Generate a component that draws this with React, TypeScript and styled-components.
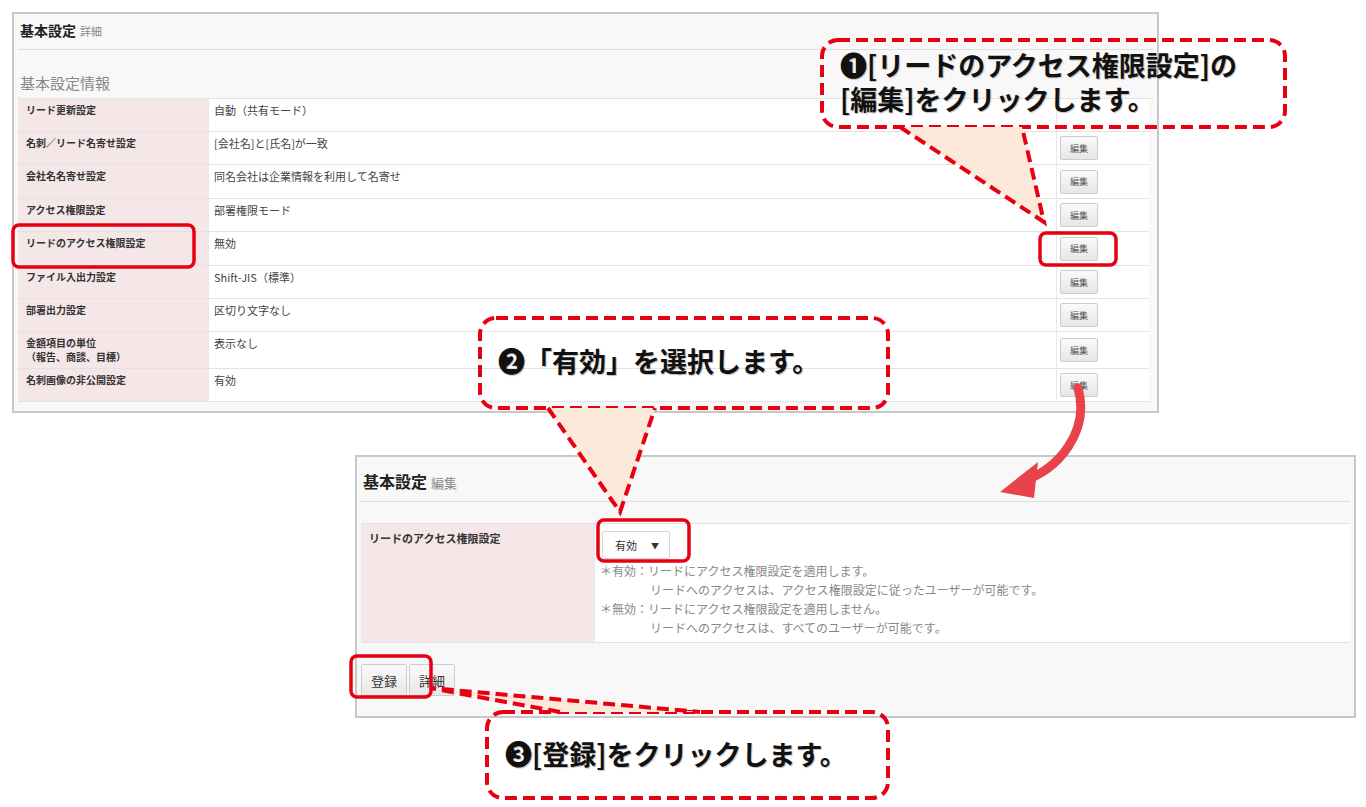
import React from "react";
import styled, { createGlobalStyle } from "styled-components";

const Global = createGlobalStyle`
  body { margin: 0; background: #fff; font-family: "Noto Sans CJK JP", "Noto Sans", sans-serif; color: #333; }
`;

const Page = styled.div`
  position: relative;
  width: 1366px;
  height: 807px;
  padding: 12px 0 0 12px;
  box-sizing: border-box;
`;

const Panel = styled.div<{ $w: number; $h: number; $ml?: number; $mt?: number }>`
  width: ${({ $w }) => $w}px;
  height: ${({ $h }) => $h}px;
  margin-left: ${({ $ml }) => $ml ?? 0}px;
  margin-top: ${({ $mt }) => $mt ?? 0}px;
  box-sizing: border-box;
  border: 2px solid #c8c8c8;
  background: #f8f8f8;
  padding: 0 4px;
  display: flex;
  flex-direction: column;
`;

const Head = styled.div`
  display: flex;
  align-items: baseline;
  gap: 4px;
  height: 36px;
  padding-top: 6px;
  padding-left: 2px;
  box-sizing: border-box;
  border-bottom: 1px solid #ddd;
  font-size: 14px;
  font-weight: 700;
  color: #222;
  span { font-size: 11px; font-weight: 400; color: #888; }
`;

const Sub = styled.div`
  font-size: 15px;
  color: #888;
  padding: 22px 0 5px 2px;
`;

const Table = styled.div<{ $cols: string; $mt?: number }>`
  display: grid;
  grid-template-columns: ${({ $cols }) => $cols};
  border-top: 1px solid #e2e2e2;
  margin-top: ${({ $mt }) => $mt ?? 0}px;
  font-size: 11px;
`;

const Label = styled.div<{ $h: number }>`
  background: #f5e6e8;
  height: ${({ $h }) => $h}px;
  box-sizing: border-box;
  padding: 4px 8px;
  font-weight: 700;
  font-size: 10px;
  color: #333;
  border-bottom: 1px solid #e2e2e2;
  line-height: 14px;
`;

const Value = styled.div<{ $h: number }>`
  background: #fff;
  height: ${({ $h }) => $h}px;
  box-sizing: border-box;
  padding: 3px 5px;
  color: #444;
  border-bottom: 1px solid #e2e2e2;
  border-left: 1px solid #e8e8e8;
`;

const BtnCell = styled(Value)`
  display: flex;
  align-items: center;
  padding-left: 3px;
`;

const SmallBtn = styled.div`
  width: 36px;
  height: 22px;
  border: 1px solid #ccc;
  border-radius: 2px;
  background: linear-gradient(#fafafa, #e6e6e6);
  font-size: 9px;
  color: #555;
  display: grid;
  place-items: center;
`;

const SelectBox = styled.div`
  width: 68px;
  height: 28px;
  margin: 4px 0 0 2px;
  border: 1px solid #d4d4d4;
  border-radius: 2px;
  background: #fff;
  display: flex;
  align-items: center;
  justify-content: space-between;
  padding: 0 10px 0 12px;
  box-sizing: border-box;
  font-size: 11px;
  color: #333;
`;

const Note = styled.div`
  font-size: 12px;
  color: #888;
  line-height: 19px;
  margin-top: 2px;
  div { padding-left: 50px; }
  p { margin: 0; }
`;

const BtnRow = styled.div`
  display: flex;
  gap: 2px;
  margin-top: 21px;
`;

const Btn = styled.div`
  height: 30px;
  padding: 0 9px;
  border: 1px solid #ccc;
  border-radius: 2px;
  background: linear-gradient(#fafafa, #e8e8e8);
  font-size: 13px;
  color: #333;
  display: grid;
  place-items: center;
`;

const Overlay = styled.svg`
  position: absolute;
  left: 0;
  top: 0;
  pointer-events: none;
`;

const CalloutText = styled.div<{ $x: number; $y: number }>`
  position: absolute;
  left: ${({ $x }) => $x}px;
  top: ${({ $y }) => $y}px;
  font-size: 27px;
  font-weight: 700;
  line-height: 34px;
  color: #111;
  text-shadow: 1px 1px 1px rgba(0,0,0,0.25);
  white-space: nowrap;
`;

const rows: [string, string, number][] = [
  ["リード更新設定", "自動（共有モード）", 33],
  ["名刺／リード名寄せ設定", "[会社名]と[氏名]が一致", 33],
  ["会社名名寄せ設定", "同名会社は企業情報を利用して名寄せ", 34],
  ["アクセス権限設定", "部署権限モード", 33],
  ["リードのアクセス権限設定", "無効", 34],
  ["ファイル入出力設定", "Shift-JIS（標準）", 33],
  ["部署出力設定", "区切り文字なし", 33],
  ["金額項目の単位\n（報告、商談、目標）", "表示なし", 37],
  ["名刺画像の非公開設定", "有効", 33],
];

const dash = { stroke: "#e60012", strokeWidth: 4, strokeDasharray: "12 6", fill: "none" } as const;
const fillC = "#fde9d9";

const Callout = ({ x, y, w, h, tail }: { x: number; y: number; w: number; h: number; tail: [number, number][] }) => (
  <g>
    <rect x={x} y={y} width={w} height={h} rx={16} fill={fillC} style={dash} />
    <polygon points={tail.map(p => p.join(",")).join(" ")} fill={fillC} />
    <polyline points={tail.map(p => p.join(",")).join(" ")} {...dash} />
  </g>
);

const Hl = ({ x, y, w, h }: { x: number; y: number; w: number; h: number }) => (
  <rect x={x} y={y} width={w} height={h} rx={6} fill="none" stroke="#e60012" strokeWidth={3.5} />
);

export default function App() {
  return (
    <Page>
      <Global />
      <Panel $w={1147} $h={401}>
        <Head>基本設定<span>詳細</span></Head>
        <Sub>基本設定情報</Sub>
        <Table $cols="190px 848px 93px">
          {rows.map(([l, v, h]) => (
            <React.Fragment key={l}>
              <Label $h={h} style={{ whiteSpace: "pre-line" }}>{l}</Label>
              <Value $h={h}>{v}</Value>
              <BtnCell $h={h}>{l !== "リード更新設定" ? <SmallBtn>編集</SmallBtn> : null}</BtnCell>
            </React.Fragment>
          ))}
        </Table>
      </Panel>
      <Panel $w={1001} $h={263} $ml={343} $mt={42}>
        <Head style={{ height: 45, paddingTop: 12, fontSize: 16 }}>基本設定<span style={{ fontSize: 13 }}>編集</span></Head>
        <Table $cols="233px 1fr" $mt={21}>
          <Label $h={119} style={{ fontSize: 11, paddingTop: 7 }}>リードのアクセス権限設定</Label>
          <Value $h={119}>
            <SelectBox>有効<span style={{ fontSize: 8 }}>▼</span></SelectBox>
            <Note>
              <p>＊有効：リードにアクセス権限設定を適用します。</p>
              <div>リードへのアクセスは、アクセス権限設定に従ったユーザーが可能です。</div>
              <p>＊無効：リードにアクセス権限設定を適用しません。</p>
              <div>リードへのアクセスは、すべてのユーザーが可能です。</div>
            </Note>
          </Value>
        </Table>
        <BtnRow>
          <Btn>登録</Btn>
          <Btn>詳細</Btn>
        </BtnRow>
      </Panel>

      <Overlay width={1366} height={807}>
        <Hl x={13} y={225} w={181} h={42} />
        <Hl x={1040} y={233} w={76} h={32} />
        <Hl x={598} y={520} w={91} h={41} />
        <Hl x={351} y={656} w={80} h={41} />
        <path d="M1078 388 C1090 430 1060 470 1020 482" stroke="#e8434a" strokeWidth={9} fill="none" strokeLinecap="round" />
        <polygon points="1000,492 1038,462 1034,498" fill="#e8434a" />
        <Callout x={822} y={40} w={463} h={87} tail={[[900, 127], [1044, 222], [1022, 127]]} />
        <Callout x={480} y={318} w={408} h={90} tail={[[548, 408], [620, 512], [655, 408]]} />
        <Callout x={487} y={712} w={401} h={86} tail={[[560, 712], [430, 688], [700, 712]]} />
      </Overlay>
      <CalloutText $x={840} $y={48}>❶[リードのアクセス権限設定]の<br />[編集]をクリックします。</CalloutText>
      <CalloutText $x={498} $y={344}>❷「有効」を選択します。</CalloutText>
      <CalloutText $x={505} $y={737}>❸[登録]をクリックします。</CalloutText>
    </Page>
  );
}
